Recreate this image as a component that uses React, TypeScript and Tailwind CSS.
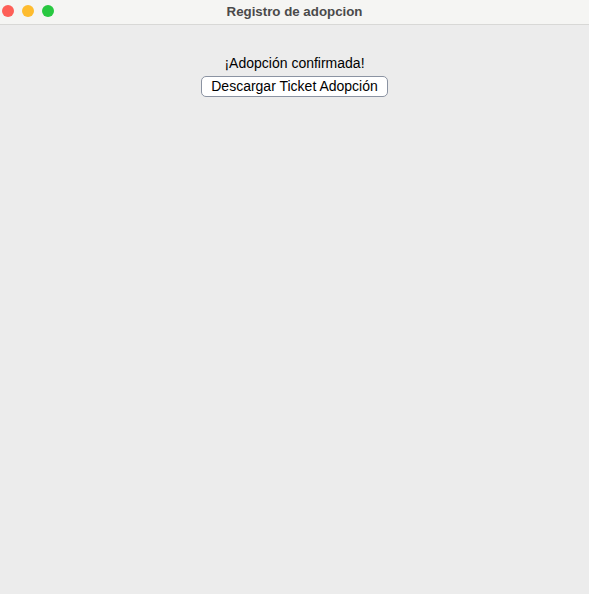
export default function App() {
  return (
    <div className="flex h-[594px] w-[589px] flex-col bg-[#ececec] font-['Liberation_Sans','Noto_Sans',sans-serif]">
      <div className="relative flex h-[25px] items-center justify-center border-b border-[#d8d8d6] bg-[#f5f5f3]">
        <div className="absolute left-[2px] top-[5px] flex gap-[8px]">
          <span className="h-[12px] w-[12px] rounded-full bg-[#fe5f57]" />
          <span className="h-[12px] w-[12px] rounded-full bg-[#febc2e]" />
          <span className="h-[12px] w-[12px] rounded-full bg-[#28c840]" />
        </div>
        <p className="text-[13.3px] font-bold text-[#4a4a4a]">Registro de adopcion</p>
      </div>
      <div className="flex flex-col items-center pt-[29px]">
        <p className="text-[14px] leading-[18px] text-black">¡Adopción confirmada!</p>
        <button className="mt-[4px] h-[21px] rounded-[5px] border-[1.5px] border-[#8b93a2] bg-white px-[9px] text-[14px] leading-[17px] text-black">
          Descargar Ticket Adopción
        </button>
      </div>
    </div>
  );
}
